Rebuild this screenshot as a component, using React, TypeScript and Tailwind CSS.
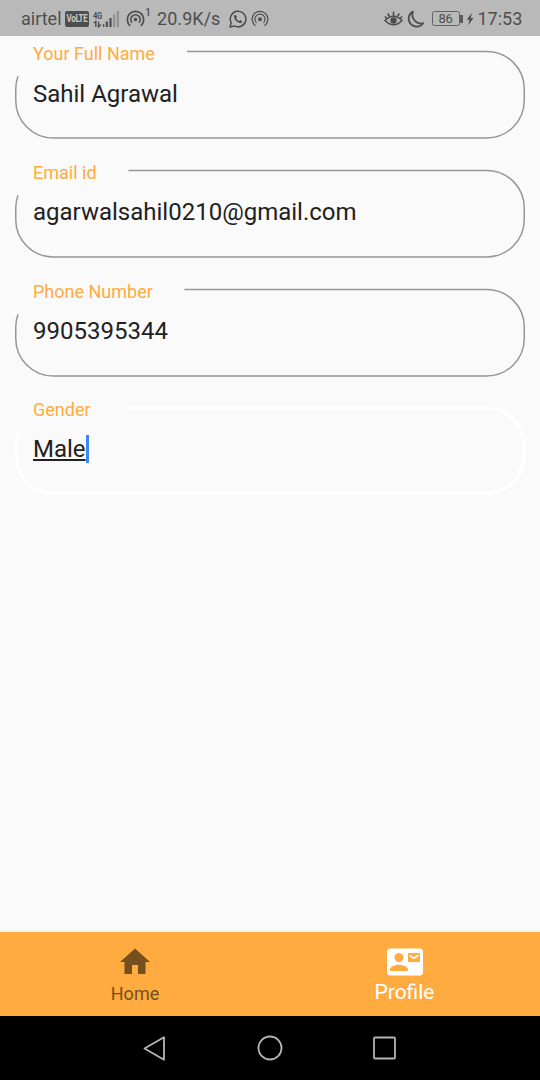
import React from "react";

type FieldProps = {
  label: string;
  value: string;
  gapEnd: number;
  focused?: boolean;
};

function Field({ label, value, gapEnd, focused = false }: FieldProps) {
  const outline = focused
    ? `M${gapEnd} 2H486.5A37 37 0 0 1 523.5 39V50.25A37 37 0 0 1 486.5 87.25H53.5A37 37 0 0 1 16.5 50.25V39A37 37 0 0 1 18.500 27`
    : `M${gapEnd} 1.4H486.75A37.5 37.5 0 0 1 524.25 38.9V50.4A37.5 37.5 0 0 1 486.75 87.9H53.25A37.5 37.5 0 0 1 15.75 50.4V38.9A37.5 37.5 0 0 1 18 26.2`;
  return (
    <div className="relative h-[118.6px] pl-[33px]">
      <svg
        className="absolute top-0 left-0 overflow-visible"
        width="540"
        height="92"
        viewBox="0 0 540 92"
        fill="none"
        stroke={focused ? "#ffffff" : "#969696"}
        strokeWidth={focused ? 3 : 1.5}
      >
        <path d={outline} />
      </svg>
      <div className="relative flex flex-col items-start">
        <label className="-mt-[7px] h-[22px] text-[18px] leading-[22px] whitespace-nowrap text-[#ffab40]">{label}</label>
        <div className="mt-[14.2px] flex h-[28px] items-start text-[24px] leading-[28px] whitespace-nowrap text-[#212121]">
          <span className={focused ? "underline decoration-[1.5px] underline-offset-[2px]" : ""}>{value}</span>
          {focused && <span className="h-[28px] w-[3px] bg-[#4285f4]" />}
        </div>
      </div>
    </div>
  );
}

function Volte() {
  return (
    <span className="ml-[3px] flex h-[16px] w-[24px] shrink-0 items-center justify-center rounded-[2px] bg-[#4e4e4e]">
      <span className="scale-y-130 text-[8px] leading-[10px] font-bold tracking-[-0.300px] text-[#c9c9c9]">VoLTE</span>
    </span>
  );
}

function Signal() {
  return (
    <span className="ml-[4px] flex h-[18px] w-[27px] shrink-0 items-end">
      <span className="flex w-[10px] flex-col items-start">
        <span className="scale-y-125 text-[7.500px] leading-[9px] font-bold tracking-[-0.300px]">4G</span>
        <svg width="10" height="8" viewBox="0 0 10 8" fill="none" stroke="#4e4e4e" strokeWidth="1.400">
          <path d="M.8 3L2.800 1.500V7M5.500 1.500V6.800L8 4.500" />
        </svg>
      </span>
      <svg width="17" height="18" viewBox="0 0 17 18">
        <path d="M-1 14h2.200v3H-1zM2.700 11.500h2.200V17H2.700zM6.400 8h2.200v9H6.400z" fill="#4e4e4e" />
        <path d="M10.100 4.500h2.200V17h-2.200zM13.800 1H16v16h-2.200z" fill="#919191" />
      </svg>
    </span>
  );
}

function Hotspot() {
  return (
    <svg className="ml-[6px] shrink-0" width="19" height="18" viewBox="0 0 19 18" fill="none" stroke="#4e4e4e" strokeWidth="1.700">
      <path d="M4.200 15.800A8.200 8.200 0 1 1 14.800 15.800" />
      <path d="M6 12.700A4.700 4.700 0 1 1 13 12.700" />
      <circle cx="9.500" cy="9.500" r="1.800" fill="#4e4e4e" stroke="none" />
    </svg>
  );
}

function WhatsApp() {
  return (
    <svg className="ml-[9px] shrink-0" width="18" height="18" viewBox="0 0 18 18">
      <path d="M1 17l1.200-4.300A7.800 7.800 0 1 1 5.400 15.900Z" fill="none" stroke="#4e4e4e" strokeWidth="1.500" strokeLinejoin="round" />
      <path d="M6.500 4.700c-1 .2-1.700 1.100-1.500 2.300.5 3 3.300 5.700 6.200 6.100 1.100.1 2-.7 2.100-1.700l-2.100-1.300-1.200 1.100C8.700 10.600 7.500 9.400 7.100 8.100l1-1Z" fill="#4e4e4e" />
    </svg>
  );
}

function Cast() {
  return (
    <svg className="ml-[4px] shrink-0" width="18" height="18" viewBox="0 0 18 18" fill="none" stroke="#4e4e4e" strokeWidth="1.200">
      <path d="M4.500 15.700A7.900 7.900 0 1 1 13.500 15.700" />
      <path d="M5.500 12.900A5.100 5.100 0 1 1 12.500 12.900" />
      <circle cx="9" cy="9.200" r="2" fill="#4e4e4e" stroke="none" />
    </svg>
  );
}

function StatusBar() {
  return (
    <header className="flex h-9 items-center bg-[#b9b9b9] pt-[1px] pr-[17.500px] pl-[21px] text-[18px] leading-none text-[#4e4e4e]">
      <span className="w-[41px]">airtel</span>
      <Volte />
      <Signal />
      <Hotspot />
      <sup className="top-[-5px] w-[6px] text-[10.500px] leading-none font-medium">1</sup>
      <span className="ml-[6px] w-[63px] tracking-[0.050px] whitespace-nowrap">20.9K/s</span>
      <WhatsApp />
      <Cast />
      <svg className="ml-auto shrink-0" width="19" height="18" viewBox="0 0 19 18" fill="none" stroke="#4e4e4e" strokeWidth="1.600">
        <path d="M1 10.500Q9.500 2 18 10.500Q9.500 19 1 10.500Z" />
        <circle cx="9.500" cy="10.500" r="3.200" fill="#4e4e4e" stroke="none" />
        <path d="M9.500 1.500V6M3.700 3.500L5.500 6.500M15.300 3.500L13.500 6.500M.8 6.500L2.800 8.300M18.200 6.500L16.200 8.300" />
      </svg>
      <svg className="ml-[4.500px] shrink-0" width="18" height="18" viewBox="0 0 18 18" fill="none" stroke="#4e4e4e" strokeWidth="1.700" strokeLinejoin="round">
        <path d="M6 1.500A8 8 0 1 0 16.200 13.200C9.500 14.800 3.500 8.500 6 1.500Z" />
      </svg>
      <span className="ml-[6.500px] flex h-[15px] w-[28px] items-center justify-center rounded-[2.500px] border-[1.200px] border-[#626262] text-[13px] tracking-[-0.200px]">86</span>
      <span className="h-[8px] w-[3px] bg-[#5b5b5b]" />
      <svg className="ml-[3px] shrink-0" width="8" height="14" viewBox="0 0 8 14">
        <path d="M5.800.8L.8 7.800H3.400L2.200 13.200 7.500 5.900H4.800Z" fill="#4e4e4e" />
      </svg>
      <span className="ml-[4px] w-[45px] whitespace-nowrap">17:53</span>
    </header>
  );
}

export default function App() {
  return (
    <div className="flex h-[1080px] w-[540px] flex-col overflow-hidden bg-[#fafafa] font-['Roboto',sans-serif]">
      <StatusBar />
      <main className="flex-1 pt-[14.400px]">
        <Field label="Your Full Name" value="Sahil Agrawal" gapEnd={187} />
        <Field label="Email id" value="agarwalsahil0210@gmail.com" gapEnd={128.5} />
        <Field label="Phone Number" value="9905395344" gapEnd={184.5} />
        <Field label="Gender" value="Male" gapEnd={123} focused />
      </main>
      <nav className="grid h-[84px] shrink-0 grid-cols-2 bg-[#ffab40] shadow-[0_-1px_4px_rgba(0,0,0,0.06)]">
        <button className="flex flex-col items-center pt-[12px] text-[#754f1d]">
          <svg width="36" height="36" viewBox="0 0 24 24" fill="currentColor">
            <path d="M10 20v-6h4v6h5v-8h3L12 3 2 12h3v8z" />
          </svg>
          <span className="mt-[3px] text-[18px] leading-[22px]">Home</span>
        </button>
        <button className="flex flex-col items-center pt-[12px] text-white">
          <svg width="36" height="36" viewBox="0 0 24 24" fill="currentColor">
            <path d="M22 3H2C.9 3 0 3.900 0 5v14c0 1.100.9 2 2 2h20c1.100 0 1.990-.9 1.990-2L24 5c0-1.100-.9-2-2-2zM8 6c1.660 0 3 1.340 3 3s-1.340 3-3 3-3-1.340-3-3 1.340-3 3-3zm6 12H2v-1c0-2 4-3.100 6-3.100s6 1.100 6 3.100v1zm8-6h-8V6h8v6zm-1-5.200l-3 2-3-2v1.300l3 2 3-2V6.800z" />
          </svg>
          <span className="mt-px -ml-[1px] text-[21px] leading-[22px]">Profile</span>
        </button>
      </nav>
      <footer className="flex h-16 shrink-0 items-center bg-black pl-[142px]">
        <svg width="24" height="28" viewBox="0 0 24 28" fill="none" stroke="#b5b5b5" strokeWidth="1.800" strokeLinejoin="round">
          <path d="M2.500 14.500L22 3.300V25.700Z" />
        </svg>
        <svg className="ml-[90px]" width="28" height="28" viewBox="0 0 28 28" fill="none" stroke="#b5b5b5" strokeWidth="1.800">
          <circle cx="14" cy="14" r="11.500" />
        </svg>
        <svg className="ml-[88px]" width="26" height="26" viewBox="0 0 26 26" fill="none" stroke="#b5b5b5" strokeWidth="1.800">
          <rect x="2" y="2.500" width="21" height="21" rx="1" />
        </svg>
      </footer>
    </div>
  );
}
